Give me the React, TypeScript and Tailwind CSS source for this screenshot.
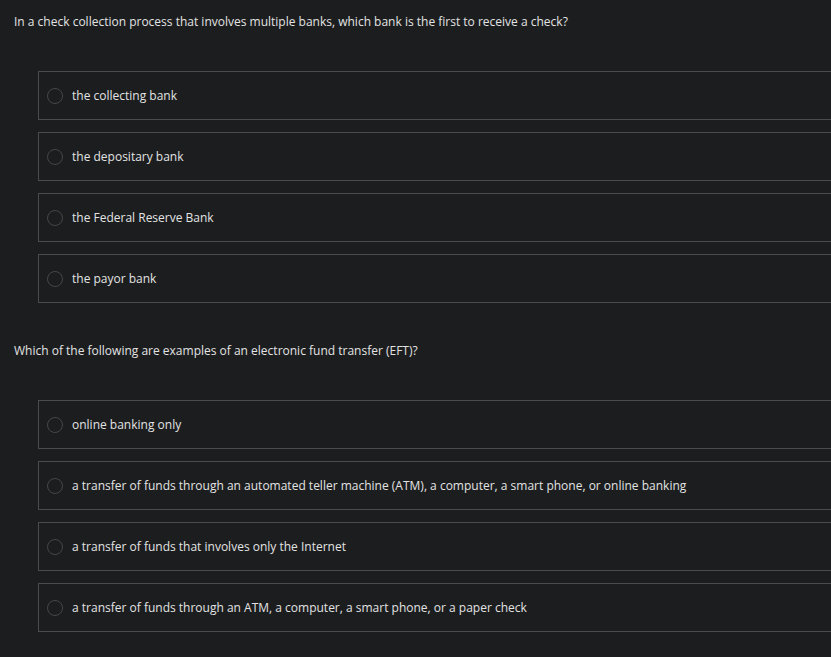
const questions = [
  {
    text: "In a check collection process that involves multiple banks, which bank is the first to receive a check?",
    options: ["the collecting bank", "the depositary bank", "the Federal Reserve Bank", "the payor bank"],
  },
  {
    text: "Which of the following are examples of an electronic fund transfer (EFT)?",
    options: [
      "online banking only",
      "a transfer of funds through an automated teller machine (ATM), a computer, a smart phone, or online banking",
      "a transfer of funds that involves only the Internet",
      "a transfer of funds through an ATM, a computer, a smart phone, or a paper check",
    ],
  },
]

function Option({ label }: { label: string }) {
  return (
    <div className="flex items-center h-[49px] border border-[#4a4b4e] -mr-4 pl-[8px]">
      <span className="w-4 h-4 rounded-full border border-[#44464a] shrink-0" />
      <span className="ml-[9px] text-[12px] text-[#e3e3e3]">{label}</span>
    </div>
  )
}

export default function App() {
  return (
    <div
      className="min-h-screen w-full overflow-hidden bg-[#1c1d1f] pt-[13px]"
      style={{ fontFamily: '"Open Sans", sans-serif' }}
    >
      {questions.map((q, i) => (
        <div key={i} className={i > 0 ? "mt-[39px]" : ""}>
          <p className="pl-[14px] text-[12px] leading-[18px] text-[#e3e3e3]">{q.text}</p>
          <div className="mt-[40px] ml-[38px] flex flex-col gap-[12px]">
            {q.options.map((o) => (
              <Option key={o} label={o} />
            ))}
          </div>
        </div>
      ))}
    </div>
  )
}
